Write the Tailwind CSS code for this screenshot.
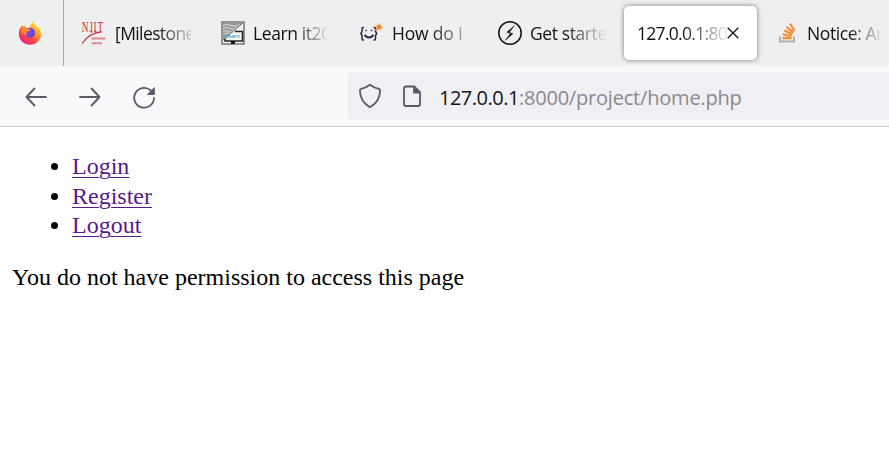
<!DOCTYPE html>
<html lang="en">
<head>
<meta charset="utf-8">
<title>127.0.0.1:8000/project/home.php</title>
<script src="https://cdn.jsdelivr.net/npm/@tailwindcss/browser@4"></script>
</head>
<body class="w-[889px] h-[468px] overflow-hidden bg-white font-['Open_Sans','Noto_Sans',sans-serif]">
<header>
  <div class="flex h-[66px] bg-[#efefef] text-[17.5px] leading-[66px] tracking-[-0.4px] text-[#111] whitespace-nowrap">
    <div class="w-16 shrink-0 border-r border-[#acacac] flex items-center pl-[18px]">
      <svg class="w-6 h-6" viewBox="0 0 24 24">
        <defs>
          <linearGradient id="fox" x1=".85" y1=".1" x2=".25" y2=".95"><stop offset="0" stop-color="#ffe52e"/><stop offset=".38" stop-color="#ff9b21"/><stop offset=".68" stop-color="#ff493f"/><stop offset="1" stop-color="#e81d86"/></linearGradient>
          <linearGradient id="globe" x1="0" y1="0" x2="1" y2="1"><stop offset="0" stop-color="#a04be8"/><stop offset="1" stop-color="#5147cf"/></linearGradient>
        </defs>
        <path d="M15 .5c1.2 3 3.2 4 5 5.800 2.400 2 3.200 5 3.200 7.200C22.700 19.500 18 23.700 12 23.700 5.500 23.700.800 18.700.800 12.500c0-2.500.700-4.600 2-6.500l.600-1.500 1.300 1.100L6.500 4.500l1 2.200 4.300.2C12 4 13.500 2 15 .5Z" fill="url(#fox)"/>
        <circle cx="12" cy="11.600" r="5.200" fill="url(#globe)"/>
        <path d="M3.500 6.500 7 5.800l1 1.700 4.500.9c-.500 1.600-2.200 1.700-3.700 2.300-.700 1.100-.500 2.300.2 3.300-3.200.2-5.500-2-5.500-4Z" fill="#ff8b24"/>
      </svg>
    </div>
    <div class="flex w-[139px] shrink-0 items-center pl-[17px]">
      <svg class="w-[26px] h-6 shrink-0 overflow-visible" viewBox="0 0 26 24" fill="none" stroke="#c8303a">
        <text transform="translate(.8 10.500) scale(.6 1)" fill="#c8303a" stroke="none" font-family="Liberation Serif" font-size="15.500" letter-spacing="1.200">NJIT</text>
        <path d="M10.800 9.500v2.500M14.800 9.500v2.500" stroke-width="1"/>
        <path d="M1 22.500Q8 12 20.500 10.800" stroke-width="1.200"/>
        <path d="M10.500 17.500h14" stroke-width="1.900" stroke-dasharray="2.500 .3" stroke="#e07b80"/>
        <path d="M11 22.200h10" stroke-width="1.900" stroke-dasharray="2 .3" stroke="#e07b80"/>
      </svg>
      <span class="ml-2 w-[76px] overflow-hidden bg-linear-to-r from-[#111] from-55% to-transparent to-110% bg-clip-text tracking-[-0.6px] text-transparent">[Milestone</span>
    </div>
    <div class="flex w-[138px] shrink-0 items-center pl-[18px]">
      <svg class="w-6 h-6 shrink-0" viewBox="0 0 24 24" fill="none">
        <rect x="1" y="1" width="22" height="22" fill="#f1f1f1" stroke="#777" stroke-width="1.500"/>
        <path d="M2 2h20L2 19Z" fill="#999"/>
        <path d="M2 4.500q4-2 8 0t9-1M2 7.500q4-2 7 0t7-1M2 10.500q3-2 5 0t6-1M2 13.500q3-2 6-1" stroke="#ddd"/>
        <path d="M15 10.500h6.500v9.500H4v-2.500L10 14Z" fill="#f8f8f8"/>
        <path d="M14 10.500h7.500V20H4v-2.500" stroke="#222" stroke-width="1.600"/>
        <path d="M10 20h4v3h-4Z" fill="#111"/>
        <path d="M2 19 22 2" stroke="#777"/>
        <text x="4.500" y="17.300" font-family="Open Sans" font-size="5.800" font-weight="600" textLength="14" lengthAdjust="spacingAndGlyphs" fill="#39acd9">Learn</text>
      </svg>
      <span class="ml-2 w-[76px] overflow-hidden bg-linear-to-r from-[#111] from-55% to-transparent bg-clip-text text-transparent">Learn it202</span>
    </div>
    <div class="flex w-[139px] shrink-0 items-center pl-[19px]">
      <svg class="w-6 h-6 shrink-0" viewBox="0 0 24 24" fill="none" stroke="#29244b" stroke-width="1.500">
        <path d="M4 6.500H3q-1 0-1 1.500v2.500L.8 12.500 2 14.500v3q0 1.500 1 1.500h1M13.500 6.500h1q1 0 1 1.500v2.500l1.200 2-1.200 2v3q0 1.500-1 1.500h-1"/>
        <path d="M4.500 14q4.500 5 9 0" stroke-width="2"/>
        <path d="M5.300 9.500h1.500M10.800 9.500h1.500" stroke-width="1.500"/>
        <circle cx="19" cy="6" r="2.500" fill="#ff8125" stroke="none"/>
        <path d="m17.500 7.500-2.200 1.800" stroke="#ff8125" stroke-width="1.500"/>
        <path d="M18.500 2v1M22 2.500l-1 1M23 6.500h-1M20.500 10v-1M15.500 3.800l1 .5" stroke="#ffb27a" stroke-width="1.200"/>
      </svg>
      <span class="ml-2 w-[74px] overflow-hidden bg-linear-to-r from-[#111] from-50% to-transparent to-120% bg-clip-text tracking-[-0.2px] text-transparent">How do I</span>
    </div>
    <div class="flex w-[143px] shrink-0 items-center pl-[18px]">
      <svg class="w-6 h-6 shrink-0" viewBox="0 0 24 24">
        <circle cx="12" cy="12" r="11.200" fill="none" stroke="#111" stroke-width="1.500"/>
        <path d="m16.300 4.800-7.500 6.500 4.200.6-5.700 7.300 7.700-6.500-4.200-.7Z" fill="#111" stroke="#111" stroke-width=".5"/>
      </svg>
      <span class="ml-2 w-[77px] overflow-hidden bg-linear-to-r from-[#111] from-45% to-transparent bg-clip-text text-transparent">Get started</span>
    </div>
    <div class="mt-[6px] ml-[1px] flex h-[54px] w-[133px] shrink-0 items-center rounded-[5px] bg-white pl-[13px] shadow-[0_0_5px_rgba(0,0,0,.5)]">
      <span class="w-[90px] overflow-hidden bg-linear-to-r from-[#111] from-50% to-transparent to-105% bg-clip-text tracking-[-0.7px] text-transparent">127.0.0.1:800</span>
      <svg class="w-3 h-3 shrink-0" viewBox="0 0 12 12" stroke="#111" stroke-width="1.300"><path d="m.7.7 10.600 10.600M11.300.7.7 11.300"/></svg>
    </div>
    <div class="flex w-[132px] shrink-0 items-center pl-[19px]">
      <svg class="w-6 h-6 shrink-0" viewBox="0 0 24 24" fill="none">
        <path d="M4 15.500v5h14v-5" stroke="#a9b0b7" stroke-width="2"/>
        <path d="M6.500 17.200h9M6.800 13.400l8.900 1.700M8.200 9.500l8.100 3.800M10.600 6l6.800 5.700M14 2.500l4.500 7.500" stroke="#f48b35" stroke-width="2.200"/>
      </svg>
      <span class="ml-[7px] w-[76px] overflow-hidden bg-linear-to-r from-[#111] from-55% to-transparent bg-clip-text text-transparent">Notice: Arr</span>
    </div>
  </div>
  <nav class="flex h-[61px] items-center border-b border-[#c8c8ca] bg-[#f9f9fb]">
    <div class="flex w-[347px] items-center gap-[30px] pl-6 shrink-0">
      <svg class="w-6 h-6" viewBox="0 0 24 24" fill="none" stroke="#5b5b66" stroke-width="1.900" stroke-linecap="round" stroke-linejoin="round"><path d="M22 13H2.500M10.500 4.500 2.500 13l8 8.500"/></svg>
      <svg class="w-6 h-6" viewBox="0 0 24 24" fill="none" stroke="#5b5b66" stroke-width="1.900" stroke-linecap="round" stroke-linejoin="round"><path d="M2 13h19.500M13.500 4.500l8 8.500-8 8.500"/></svg>
      <svg class="w-6 h-6 overflow-visible" viewBox="0 0 24 24" fill="none" stroke="#5b5b66" stroke-width="1.800" stroke-linecap="round"><path d="M22 14A9.900 9.900 0 1 1 18.500 6.200"/><path d="M22.300 4v6.500h-6.500Z" fill="#5b5b66" stroke-width="1" stroke-linejoin="round"/></svg>
    </div>
    <div class="flex h-12 flex-1 items-center rounded-l-[5px] bg-[#f0eff4] pl-[11px]">
      <svg class="w-6 h-[26px]" viewBox="0 0 24 26" fill="none" stroke="#5b5b66" stroke-width="1.800" stroke-linejoin="round"><path d="M12 1.800q-4.500 3.400-9.300 4.200-.8.200-.8 1.200Q2 18.500 12 24.200 22 18.500 22.100 7.200q0-1-.8-1.200-4.800-.8-9.300-4.200Z"/></svg>
      <svg class="ml-5 w-5 h-6" viewBox="0 0 20 24" fill="none" stroke="#5b5b66" stroke-width="1.800" stroke-linejoin="round"><path d="M4 2.500h8l6 6V20q0 2-2 2H4q-2 0-2-2V4.500q0-2 2-2Z"/><path d="M12 2.500v6h6Z" fill="#5b5b66"/></svg>
      <span class="ml-[17px] pt-[3px] text-[20px] leading-6 tracking-[-0.5px] text-[#15141a] whitespace-nowrap">127.0.0.1<span class="tracking-[-0.2px] text-[#8a898e]">:8000/project/home.php</span></span>
    </div>
  </nav>
</header>
<main class="px-3 pt-[25px] font-['Liberation_Serif',serif] text-[24px] leading-[29.5px] text-black">
  <ul class="list-disc pl-[60px] text-[#551a8b] marker:text-black">
    <li><a class="underline decoration-[1px] underline-offset-[3px]">Login</a></li>
    <li><a class="underline decoration-[1px] underline-offset-[3px]">Register</a></li>
    <li><a class="underline decoration-[1px] underline-offset-[3px]">Logout</a></li>
  </ul>
  <p class="mt-[22px]">You do not have permission to access this page</p>
</main>
</body>
</html>
